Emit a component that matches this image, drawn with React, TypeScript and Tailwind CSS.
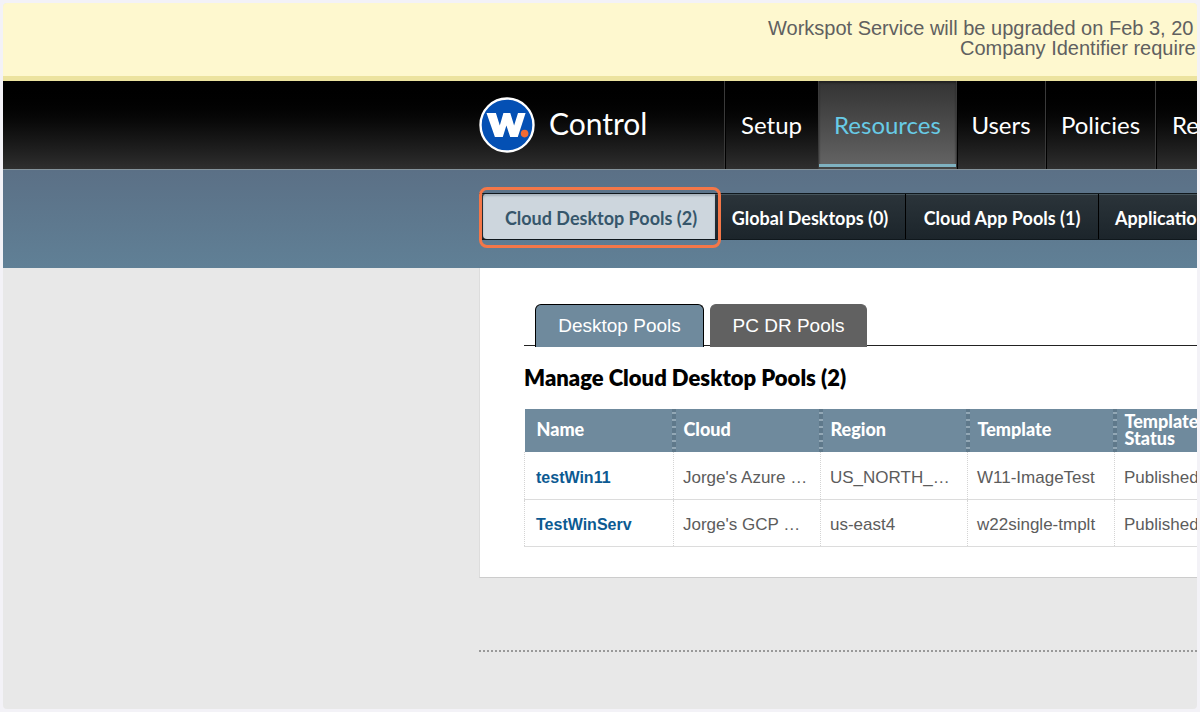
import React from 'react';

interface NavItem {
  label: string;
  width: string;
  active?: boolean;
}

const navItems: NavItem[] = [
  { label: 'Setup', width: 'w-[94px]' },
  { label: 'Resources', width: 'w-[138px]', active: true },
  { label: 'Users', width: 'w-[89px]' },
  { label: 'Policies', width: 'w-[110px]' },
];

const subNavItems: NavItem[] = [
  { label: 'Global Desktops (0)', width: 'w-[191px]' },
  { label: 'Cloud App Pools (1)', width: 'w-[193px]' },
];

const columns = ['Name', 'Cloud', 'Region', 'Template', 'Template Status'];

const pools = [
  { name: 'testWin11', cloud: "Jorge's Azure …", region: 'US_NORTH_…', template: 'W11-ImageTest', status: 'Published' },
  { name: 'TestWinServ', cloud: "Jorge's GCP …", region: 'us-east4', template: 'w22single-tmplt', status: 'Published' },
];

const Logo: React.FC = () => (
  <svg width="56" height="56" viewBox="0 0 56 56" aria-label="Workspot" className="shrink-0">
    <circle cx="28" cy="28" r="26.5" fill="#0450b4" stroke="#fff" strokeWidth="2.4" />
    <path
      d="M7.5 16h9.4l3.9 12.6L24.4 16h6.9l3.8 12.6L39 16h7.6l-7.8 24h-7.6l-3.8-11.6L23.8 40h-7.9z"
      fill="#fff"
    />
    <circle cx="45.6" cy="36.6" r="3.8" fill="#f26b35" />
  </svg>
);

const Banner: React.FC = () => (
  <div className="h-[78px] border-b-[5px] border-[#ece39f] bg-[#fef8cf] pt-[15px] font-['Liberation_Sans',sans-serif] text-[20px] leading-[20px] whitespace-nowrap text-[#606060]">
    <p className="pl-[765px]">Workspot Service will be upgraded on Feb 3, 20</p>
    <p className="pl-[957px]">Company Identifier require</p>
  </div>
);

const MainNav: React.FC = () => (
  <header className="flex h-[89px] border-b border-[#84939c] bg-linear-to-b from-black to-[#2f2f2f] pl-[476px]">
    <div className="flex w-[245px] shrink-0 items-center gap-[14px]">
      <Logo />
      <span className="pb-1 text-[30px] text-white">Control</span>
    </div>
    <nav className="flex shrink-0">
      {navItems.map((item) => (
        <a
          key={item.label}
          href="#"
          className={`flex shrink-0 flex-col items-center justify-center border-l border-[#3a3a3a] text-[24px] ${item.width} ${
            item.active
              ? 'bg-linear-to-b from-[#333] to-[#666] text-[#68cbe6] shadow-[inset_0_-2px_#444,inset_0_-5px_#7fb2c1,inset_0_2px_2px_#222]'
              : 'text-white shadow-[inset_1px_0_#000]'
          }`}
        >
          {item.label}
        </a>
      ))}
      <a href="#" className="flex items-center border-l border-[#3a3a3a] pl-4 text-[24px] text-white shadow-[inset_1px_0_#000]">
        Re
      </a>
    </nav>
  </header>
);

const SubNav: React.FC = () => (
  <div className="h-[98px] bg-linear-to-b from-[#5b7086] to-[#608096] pt-[23px] pl-[476px]">
    <nav className="relative flex h-[47px] border-y border-[#10181d] bg-linear-to-b from-[#2b343a] to-[#1c252b] text-[18px] font-bold text-white shadow-[inset_0_1px_#46545b]">
      <a
        href="#"
        className="ml-1 flex w-[232px] shrink-0 items-center justify-center rounded-l-sm bg-[#cdd6dd] pt-1 pl-1 text-[#36566b] shadow-[inset_0_2px_2px_#a9b4bc]"
      >
        Cloud Desktop Pools (2)
      </a>
      {subNavItems.map((item) => (
        <a key={item.label} href="#" className={`flex shrink-0 items-center justify-center border-r border-black pt-1 ${item.width}`}>
          {item.label}
        </a>
      ))}
      <a href="#" className="flex items-center pt-1 pl-4">
        Applicatio
      </a>
      {/* focus ring around the current section */}
      <div className="pointer-events-none absolute -top-[7px] left-0 h-[61px] w-[242px] rounded-lg border-3 border-[#f47748]" />
    </nav>
  </div>
);

const PoolTabs: React.FC = () => (
  <div className="flex h-[42px] gap-[6px] border-b border-[#222] pl-[11px] font-['Liberation_Sans',sans-serif] text-[19px] text-white">
    <button type="button" className="h-[43px] w-[169px] rounded-t-md border border-b-0 border-black bg-[#6f8a9d]">
      Desktop Pools
    </button>
    <button type="button" className="h-[43px] w-[157px] rounded-t-md border border-b-0 border-[#616161] bg-[#616161]">
      PC DR Pools
    </button>
  </div>
);

const PoolTable: React.FC = () => (
  <table className="w-full table-fixed border-collapse text-left font-['Liberation_Sans',sans-serif] text-[17px] text-[#5c5c5c]">
    <colgroup>
      <col className="w-[149px]" />
      <col className="w-[147px]" />
      <col className="w-[147px]" />
      <col className="w-[147px]" />
      <col />
    </colgroup>
    <thead className="bg-[#6f8a9d] font-['Lato',sans-serif] text-[18px] text-white">
      <tr className="h-[43px]">
        {columns.map((column, i) => (
          <th key={column} className={`relative pt-0 pb-0.5 leading-[17px] font-black ${i === 0 ? 'pl-3' : 'pl-[10px]'}`}>
            {column}
            {i < columns.length - 1 && (
              <span className="absolute top-0 -right-[2px] h-full w-1 bg-[repeating-linear-gradient(to_bottom,#5f798b_0px,#5f798b_3px,#93a8b6_3px,#93a8b6_5px,#5f798b_5px,#5f798b_7px)]" />
            )}
          </th>
        ))}
      </tr>
    </thead>
    <tbody>
      {pools.map((pool) => (
        <tr key={pool.name} className="h-[47px] border-b border-[#dcdcdc]">
          <td className="border-x border-dotted border-x-[#d4d4d4] pt-1 pl-[11px]">
            <a href="#" className="text-[16px] font-bold text-[#0c5a92]">
              {pool.name}
            </a>
          </td>
          <td className="border-r border-dotted border-r-[#d4d4d4] pt-1 pl-[9px] whitespace-nowrap">{pool.cloud}</td>
          <td className="border-r border-dotted border-r-[#d4d4d4] pt-1 pl-[9px] whitespace-nowrap">{pool.region}</td>
          <td className="border-r border-dotted border-r-[#d4d4d4] pt-1 pl-[9px] whitespace-nowrap">{pool.template}</td>
          <td className="pt-1 pl-[9px]">{pool.status}</td>
        </tr>
      ))}
    </tbody>
  </table>
);

const App: React.FC = () => {
  return (
    <div className="min-h-screen bg-[#f3f2f7] p-[3px] font-['Lato',sans-serif]">
      <div className="flex min-h-[calc(100vh-6px)] flex-col overflow-hidden rounded-[4px] bg-[#e8e8e8]">
        <Banner />
        <MainNav />
        <SubNav />
        <main className="pl-[476px]">
          <section className="border-b border-l border-b-[#ccc] border-l-[#ddd] bg-white pt-9 pb-[30px] pl-11">
            <PoolTabs />
            <h2 className="pt-4 pb-[15px] text-[22px] leading-8 font-extrabold text-black">Manage Cloud Desktop Pools (2)</h2>
            <PoolTable />
          </section>
          <hr className="mt-[72px] border-0 border-t-2 border-dotted border-[#999]" />
        </main>
      </div>
    </div>
  );
};

export default App;
